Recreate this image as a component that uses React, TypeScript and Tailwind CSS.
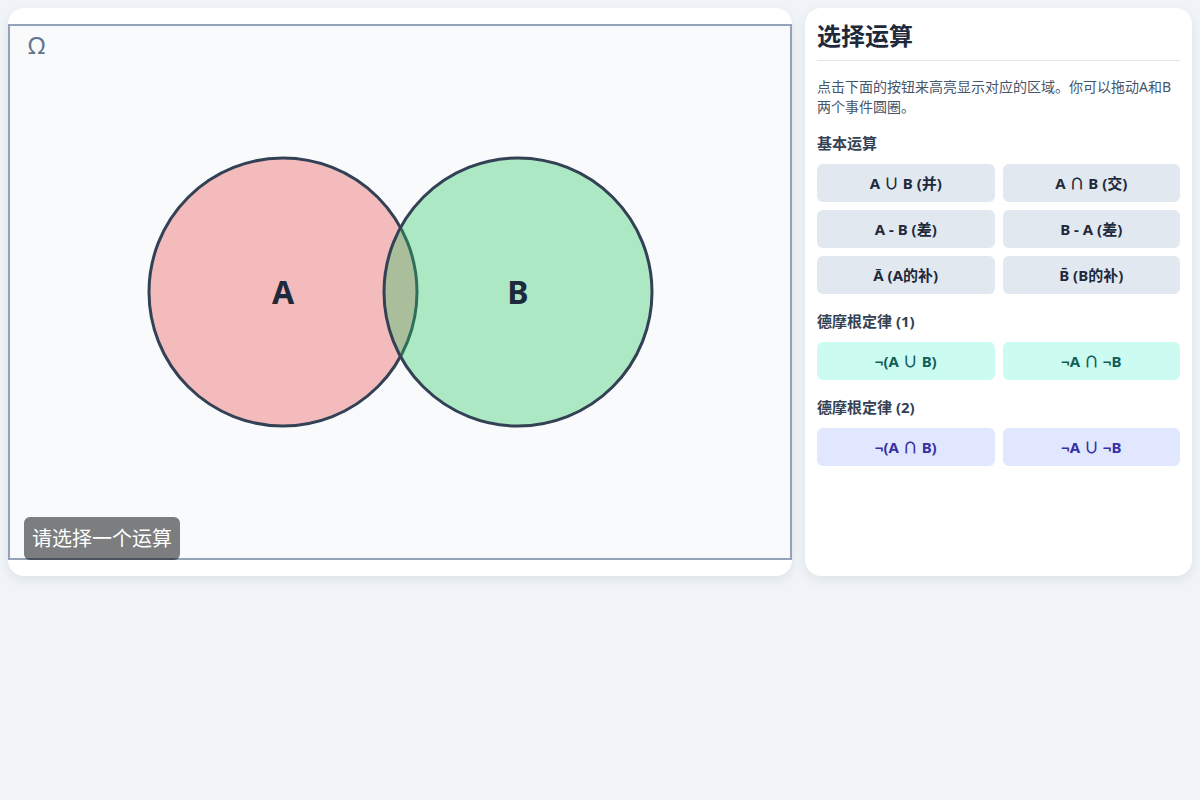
import { useState } from "react";

type Op = { label: string; tone: "base" | "teal" | "indigo" };

const basicOps: Op[] = [
  { label: "A ∪ B (并)", tone: "base" },
  { label: "A ∩ B (交)", tone: "base" },
  { label: "A - B (差)", tone: "base" },
  { label: "B - A (差)", tone: "base" },
  { label: "Ā (A的补)", tone: "base" },
  { label: "B̄ (B的补)", tone: "base" },
];

const deMorgan1: Op[] = [
  { label: "¬(A ∪ B)", tone: "teal" },
  { label: "¬A ∩ ¬B", tone: "teal" },
];

const deMorgan2: Op[] = [
  { label: "¬(A ∩ B)", tone: "indigo" },
  { label: "¬A ∪ ¬B", tone: "indigo" },
];

const toneClass = {
  base: "bg-[#e2e8f0] text-[#1e293b] hover:bg-[#cbd5e1]",
  teal: "bg-[#ccfbf1] text-[#115e59] hover:bg-[#99f6e4]",
  indigo: "bg-[#e0e7ff] text-[#3730a3] hover:bg-[#c7d2fe]",
};

const OpButton = ({ op, onPick }: { op: Op; onPick: (l: string) => void }) => (
  <button
    onClick={() => onPick(op.label)}
    className={`h-[38px] rounded-md text-[15px] font-bold ${toneClass[op.tone]}`}
  >
    {op.label}
  </button>
);

export default function App() {
  const [current, setCurrent] = useState<string | null>(null);

  return (
    <div
      className="min-h-[800px] bg-[#f0f4f8] p-2 flex gap-[13px] items-start"
      style={{ fontFamily: '"Noto Sans", "Noto Sans CJK SC", sans-serif' }}
    >
      {/* canvas card */}
      <div className="w-[784px] h-[568px] bg-white rounded-2xl shadow-[0_4px_12px_rgba(15,23,42,0.08)] py-4">
        <div className="relative h-full border-2 border-[#94a3b8] bg-[#f8fafc]">
          <svg viewBox="0 0 780 532" className="w-full h-full block">
            <circle cx={273} cy={266} r={134} fill="#ef4444" fillOpacity={0.35} stroke="#334155" strokeWidth={3} />
            <circle cx={508} cy={266} r={134} fill="#22c55e" fillOpacity={0.35} stroke="#334155" strokeWidth={3} />
            <text x={273} y={278} textAnchor="middle" fontSize={32} fontWeight={700} fill="#1e293b">A</text>
            <text x={508} y={278} textAnchor="middle" fontSize={32} fontWeight={700} fill="#1e293b">B</text>
          </svg>
          <span className="absolute left-[18px] top-[3px] text-2xl text-[#64748b]">Ω</span>
          <div className="absolute left-[14px] bottom-[-2px] h-[43px] px-2 flex items-center rounded-md bg-black/50 text-white text-xl">
            {current ?? "请选择一个运算"}
          </div>
        </div>
      </div>

      {/* operation panel */}
      <div className="flex-1 h-[568px] bg-white rounded-2xl shadow-[0_4px_12px_rgba(15,23,42,0.08)] px-3 pt-3">
        <h2 className="text-2xl font-bold text-[#1e293b] pb-2 border-b border-[#e2e8f0]">选择运算</h2>
        <p className="mt-4 text-sm leading-[19.5px] text-[#475569]">
          点击下面的按钮来高亮显示对应的区域。你可以拖动A和B两个事件圆圈。
        </p>

        <h3 className="mt-4 text-[15px] leading-[22px] font-bold text-[#334155]">基本运算</h3>
        <div className="mt-2.5 grid grid-cols-2 gap-2">
          {basicOps.map((op) => (
            <OpButton key={op.label} op={op} onPick={setCurrent} />
          ))}
        </div>

        <h3 className="mt-4 text-[15px] leading-[22px] font-bold text-[#334155]">德摩根定律 (1)</h3>
        <div className="mt-2.5 grid grid-cols-2 gap-2">
          {deMorgan1.map((op) => (
            <OpButton key={op.label} op={op} onPick={setCurrent} />
          ))}
        </div>

        <h3 className="mt-4 text-[15px] leading-[22px] font-bold text-[#334155]">德摩根定律 (2)</h3>
        <div className="mt-2.5 grid grid-cols-2 gap-2">
          {deMorgan2.map((op) => (
            <OpButton key={op.label} op={op} onPick={setCurrent} />
          ))}
        </div>
      </div>
    </div>
  );
}
